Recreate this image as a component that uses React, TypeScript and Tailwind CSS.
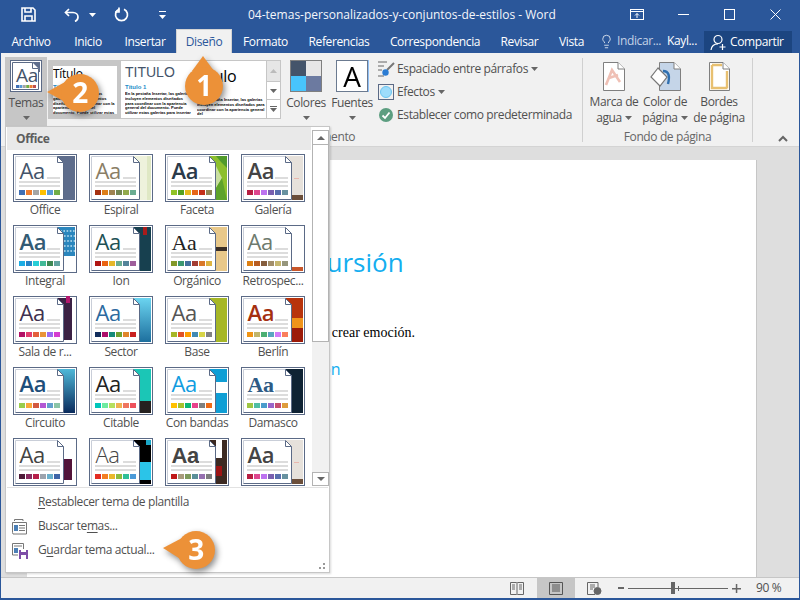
import React from "react";
import { Lightbulb } from "lucide-react";

type Theme = { name: string; aa: string; cls: string; sw: string[]; art: React.ReactNode };

const Rect = (x: number, y: number, w: number, h: number, f: string) => <rect x={x} y={y} width={w} height={h} fill={f} />;

const themes: Theme[] = [
  { name: "Office", aa: "#44546a", cls: "font-['Open_Sans']", sw: ["#3f6fb5", "#ed7d31", "#a5a5a5", "#ffc000", "#5b9bd5", "#70ad47"], art: Rect(40, 2, 22, 44, "#5e6d8c") },
  { name: "Espiral", aa: "#8a7e66", cls: "font-['Open_Sans']", sw: ["#a53010", "#de7e18", "#9f8351", "#728653", "#92aa4c", "#6aac91"], art: <>{Rect(40, 2, 22, 44, "#eef2dc")}{Rect(58, 2, 4, 44, "#dfe8c4")}</> },
  { name: "Faceta", aa: "#2a3a4a", cls: "font-['Open_Sans'] font-semibold", sw: ["#90c226", "#54a021", "#e6b91e", "#e76618", "#c42f1a", "#918655"], art: <>{Rect(40, 2, 22, 44, "#8cbf2e")}<polygon points="51,12 57,24 51,34" fill="#c9dfa0" /><polygon points="51,2 62,2 62,14 56,8" fill="#4f9a2b" /><polygon points="51,34 57,24 62,46 51,46" fill="#5ea32b" /></> },
  { name: "Galería", aa: "#444444", cls: "font-['Open_Sans'] font-semibold", sw: ["#b71e42", "#de478e", "#bc72f0", "#795faf", "#586ead", "#6892a0"], art: <>{Rect(40, 2, 22, 44, "#e6e1db")}{Rect(51, 41, 11, 5, "#6b4e3a")}{Rect(53, 24, 5, 1, "#e9b7ae")}</> },
  { name: "Integral", aa: "#335b74", cls: "font-['Open_Sans'] font-semibold", sw: ["#1cade4", "#2683c6", "#27ced7", "#42ba97", "#3e8853", "#62a39f"], art: <>{Rect(40, 2, 22, 29, "#2b86bd")}<path d="M44 6H62M51 11H62M51 16H62M51 21H62M51 26H62" stroke="#bfe0f0" strokeWidth="1.6" strokeDasharray="1.6 1.6" /></> },
  { name: "Ion", aa: "#1e5155", cls: "font-['Open_Sans']", sw: ["#b01513", "#ea6312", "#e6b729", "#6aac90", "#54849a", "#9e5e9b"], art: <>{Rect(40, 2, 22, 44, "#17404f")}{Rect(54, 2, 4, 8, "#a81c1c")}</> },
  { name: "Orgánico", aa: "#222222", cls: "font-['Liberation_Serif']", sw: ["#83992a", "#3c9770", "#44709d", "#a23c33", "#d97828", "#deb340"], art: <>{Rect(40, 2, 22, 44, "#e8c88a")}{Rect(51, 22, 11, 4, "#3a2e26")}</> },
  { name: "Retrospec...", aa: "#6e7a6e", cls: "font-['Open_Sans']", sw: ["#dd8014", "#b85c20", "#855d3d", "#a28e6a", "#c5b66f", "#96967c"], art: Rect(51, 42, 11, 4, "#c8562a") },
  { name: "Sala de r...", aa: "#40314f", cls: "font-['Open_Sans']", sw: ["#b31166", "#e33d6f", "#e45f3c", "#e9943a", "#9b6bf2", "#d53dd0"], art: <>{Rect(40, 2, 19, 42, "#3b2144")}{Rect(53, 0, 4, 7, "#b3176e")}</> },
  { name: "Sector", aa: "#2c6aa0", cls: "font-['Open_Sans']", sw: ["#122d5c", "#ad0e6a", "#148a78", "#6fa22f", "#e0862b", "#c9201f"], art: <><linearGradient id="gs" x1="0" y1="0" x2="0" y2="1"><stop offset="0" stopColor="#6bd4f0" /><stop offset="1" stopColor="#1d6f9e" /></linearGradient><rect x="40" y="2" width="22" height="44" fill="url(#gs)" /></> },
  { name: "Base", aa: "#555555", cls: "font-['Open_Sans']", sw: ["#a6b727", "#df5327", "#fe9e00", "#418ab3", "#d7d447", "#818183"], art: Rect(40, 2, 22, 44, "#a6b727") },
  { name: "Berlín", aa: "#a53010", cls: "font-['Open_Sans'] font-semibold", sw: ["#f09415", "#c1b56b", "#4baf73", "#5aa6c0", "#d17df9", "#fa7e5c"], art: <>{Rect(40, 2, 22, 20, "#b8330c")}{Rect(40, 22, 22, 10, "#f0941a")}{Rect(40, 32, 22, 14, "#9c1a08")}</> },
  { name: "Circuito", aa: "#1e4e79", cls: "font-['Open_Sans'] font-semibold", sw: ["#9acd4c", "#faa93a", "#d35940", "#b258d3", "#63a0cc", "#8ac4a7"], art: <><linearGradient id="gc" x1="0" y1="0" x2="0" y2="1"><stop offset="0" stopColor="#4fb8d8" /><stop offset="1" stopColor="#0a2a5c" /></linearGradient><rect x="40" y="2" width="22" height="44" fill="url(#gc)" /></> },
  { name: "Citable", aa: "#222222", cls: "font-['Open_Sans']", sw: ["#00c6bb", "#6feba0", "#b6df5e", "#efb251", "#ef755f", "#ed515c"], art: <>{Rect(40, 2, 22, 32, "#1bc6b6")}{Rect(40, 34, 22, 12, "#25211f")}</> },
  { name: "Con bandas", aa: "#109ce0", cls: "font-['Open_Sans']", sw: ["#ffc000", "#a5c22d", "#0bb874", "#e8418b", "#808080", "#ef6a15"], art: <>{Rect(40, 2, 22, 13, "#0f9ed5")}{Rect(40, 26, 22, 20, "#0f9ed5")}</> },
  { name: "Damasco", aa: "#2e5b85", cls: "font-['Liberation_Serif'] font-bold", sw: ["#9ec544", "#50bea3", "#4a9ccc", "#9a66ca", "#c54f71", "#de9c3c"], art: Rect(40, 2, 22, 44, "#0e2233") },
  { name: "", aa: "#444444", cls: "font-['Open_Sans']", sw: ["#4e1a38", "#8a2a5f", "#b61f4a", "#9ca3ad", "#6ab0cc", "#3e65a8"], art: Rect(40, 21, 19, 21, "#52143a") },
  { name: "", aa: "#444444", cls: "font-['Open_Sans'] font-light", sw: ["#e32d23", "#f47e22", "#e9b82c", "#8dbb3f", "#2fc098", "#4a9ad8"], art: <>{Rect(40, 2, 22, 44, "#000000")}{Rect(51, 24, 11, 18, "#2bc4e8")}{Rect(57, 2, 5, 5, "#1aa7c8")}</> },
  { name: "", aa: "#444444", cls: "font-['Liberation_Sans'] font-bold", sw: ["#c01818", "#a89b7c", "#7e9a5c", "#5a8f99", "#9670b0", "#7d7d7d"], art: <>{Rect(40, 2, 22, 44, "#3c2a22")}{Rect(51, 2, 6, 18, "#ffffff")}{Rect(51, 28, 6, 10, "#9c1414")}</> },
  { name: "", aa: "#444444", cls: "font-['Open_Sans'] font-semibold", sw: ["#b71e42", "#de478e", "#bc72f0", "#795faf", "#586ead", "#6892a0"], art: <>{Rect(40, 2, 22, 44, "#e6e1db")}{Rect(51, 41, 11, 5, "#6b4e3a")}{Rect(53, 24, 5, 1, "#e9b7ae")}</> },
];

function Tile({ t }: { t: Theme }) {
  return (
    <svg width="64" height="48" viewBox="0 0 64 48" className="block">
      <rect x="0.5" y="0.5" width="63" height="47" fill="#fff" stroke="#5b6a86" />
      {t.art}
      <path d="M2.5 2.5H44.5L50.5 8.5V45.5H2.5Z" fill="#fff" />
      <path d="M2.5 45.5V2.5H44.5" fill="none" stroke="#c9ced8" />
      <path d="M44.5 2.5L50.5 8.5V45.5H2.5M44.5 2.5V8.5H50.5" fill="none" stroke="#5b6a86" />
      <text x="6.5" y="25" fontSize="22" fill={t.aa} className={t.cls}>Aa</text>
      <rect x="34" y="23" width="13" height="2" fill="#dcdcdc" />
      <rect x="6" y="27" width="41" height="2" fill="#dcdcdc" />
      <rect x="6" y="31" width="41" height="2" fill="#dcdcdc" />
      {t.sw.map((c, i) => <rect key={i} x={6 + i * 7} y="36" width="6" height="5" fill={c} />)}
    </svg>
  );
}

function Caret({ className = "", color = "#666" }: { className?: string; color?: string }) {
  return <svg width="7" height="4" viewBox="0 0 7 4" className={"inline-block " + className}><path d="M0 0H7L3.5 4Z" fill={color} /></svg>;
}

const tabs: [string, string][] = [
  ["Archivo", "w-[62px]"], ["Inicio", "w-[52px]"], ["Insertar", "w-[62px]"], ["Diseño", "w-[56px]"], ["Formato", "w-[67px]"],
  ["Referencias", "w-[80px]"], ["Correspondencia", "w-[112px]"], ["Revisar", "w-[57px]"], ["Vista", "w-[47px]"],
];

const body = "En la pestaña Insertar, las galerías incluyen elementos diseñados para coordinar con la apariencia general del documento. Puede utilizar estas galerías para insertar tablas,";
const bodyShort = "En la pestaña Insertar, las galerías incluyen elementos diseñados para coordinar con la apariencia general del";

function Balloon({ pos, w, h, cx, cy, tail, n }: { pos: string; w: number; h: number; cx: number; cy: number; tail: string; n: string }) {
  return (
    <svg width={w} height={h} viewBox={`0 0 ${w} ${h}`} className={"absolute drop-shadow-[2px_3px_3px_rgba(0,0,0,0.45)] " + pos}>
      <polygon points={tail} fill="#ec9138" />
      <circle cx={cx} cy={cy} r="19" fill="#ec9138" />
      <text x={cx} y={cy + 10} textAnchor="middle" fontSize="28" fill="#fff" className="font-['Open_Sans'] font-bold">{n}</text>
    </svg>
  );
}

function RibbonLarge({ w, icon, l1, l2 }: { w: string; icon: React.ReactNode; l1: string; l2?: React.ReactNode }) {
  return (
    <div className={"flex flex-col items-center shrink-0 " + w}>
      <div className="h-[32px] flex items-start justify-center">{icon}</div>
      <div className="mt-[3px] h-[16px] leading-[16px] whitespace-nowrap">{l1}</div>
      {l2 ? <div className="h-[16px] leading-[16px] whitespace-nowrap flex items-center">{l2}</div> : null}
    </div>
  );
}

export default function App() {
  return (
    <div className="relative w-[800px] h-[600px] overflow-hidden bg-[#2b579a] flex flex-col font-['Open_Sans',sans-serif] text-[12px] tracking-[-0.38px] text-[#505050]">
      {/* Title bar */}
      <div className="h-[29px] flex items-center text-white">
        <div className="w-[248px] flex items-center pl-[21px]">
          <svg width="15" height="15" viewBox="0 0 15 15" fill="none" stroke="#fff" strokeWidth="1.6"><path d="M1 1H12L14 3V14H1Z" /><path d="M4 1V5H10V1M4 14V9H11V14" /></svg>
          <svg width="15" height="14" viewBox="0 0 15 14" fill="none" stroke="#fff" strokeWidth="1.7" className="ml-[28px]"><path d="M5 1L1.5 4.5L5 8" /><path d="M2 4.5H9C12 4.5 14 6.5 14 9C14 11 13 12.5 11 13.5" /></svg>
          <Caret color="#fff" className="ml-[10px]" />
          <svg width="15" height="15" viewBox="0 0 15 15" fill="none" stroke="#fff" strokeWidth="1.7" className="ml-[18px]"><path d="M5 2.2A6 6 0 1 0 10 2.2" /><path d="M4 0.5V5H0" transform="translate(1 0)" /></svg>
          <svg width="7" height="8" viewBox="0 0 7 8" fill="#fff" className="ml-[30px]"><rect x="0" y="0" width="7" height="1" /><path d="M0 4H7L3.5 8Z" /></svg>
        </div>
        <div className="w-[304px] text-center whitespace-nowrap text-[#f4f6fa] text-[12px] tracking-[0px] mt-[1px]">04-temas-personalizados-y-conjuntos-de-estilos  -  Word</div>
        <div className="flex-1 flex items-center pl-[78px]">
          <svg width="14" height="11" viewBox="0 0 14 11" fill="none" stroke="#fff"><rect x="0.5" y="0.5" width="13" height="10" /><path d="M0.5 2.5H13.5M7 9V4.5M5 6.5L7 4.5L9 6.5" /></svg>
          <svg width="11" height="1" className="ml-[34px]"><rect width="11" height="1" fill="#fff" /></svg>
          <svg width="11" height="11" fill="none" stroke="#fff" className="ml-[35px]"><rect x="0.5" y="0.5" width="10" height="10" /></svg>
          <svg width="11" height="11" fill="none" stroke="#fff" className="ml-[35px]"><path d="M0.5 0.5L10.5 10.5M10.5 0.5L0.5 10.5" /></svg>
        </div>
      </div>

      {/* Tabs */}
      <div className="h-[24px] flex items-stretch text-white">
        {tabs.map(([t, w]) => (
          <div key={t} className={"flex items-center justify-center whitespace-nowrap pt-[1px] " + w + (t === "Diseño" ? " bg-[#f1f1f1] text-[#2b579a] border-x border-t border-[#d4d4d4]" : "")}>{t}</div>
        ))}
        <div className="flex items-center ml-[4px] w-[105px] whitespace-nowrap">
          <Lightbulb size={15} strokeWidth={1.2} color="#fff" />
          <span className="ml-[3px] text-[#c4d2e6]">Indicar...</span>
          <span className="ml-[6px]">Kayl...</span>
        </div>
        <div className="w-[88px] mt-[2px] bg-[#1c4580] flex items-center pl-[6px] whitespace-nowrap">
          <svg width="17" height="17" viewBox="0 0 17 17" fill="none" stroke="#fff" strokeWidth="1.2"><circle cx="8" cy="5.5" r="4" /><path d="M1 16C1.5 12 4.5 9.8 8 9.8M12.5 10V16M9.5 13H15.5" /></svg>
          <span className="ml-[3px]">Compartir</span>
        </div>
      </div>

      <div className="flex-1 mx-[1px] flex flex-col min-h-0">
        {/* Ribbon */}
        <div className="h-[94px] bg-[#f1f1f1] border-b border-[#d4d4d4] flex shrink-0">
          <div className="w-[581px] flex flex-col">
            <div className="h-[73px] flex pl-[4px] pt-[4px]">
              <div className="w-[42px] h-[69px] bg-[#c6c6c6] flex flex-col items-center pt-[3px]">
                <svg width="32" height="32" viewBox="0 0 32 32">
                  <rect x="0.5" y="0.5" width="31" height="31" fill="#fff" stroke="#5b6a86" />
                  <rect x="20" y="2" width="10" height="10" fill="#5e6d8c" />
                  <path d="M2.5 2.5H22.5L28.5 8.5V29.5H2.5Z" fill="#fff" stroke="#5b6a86" />
                  <path d="M22.5 2.5V8.5H28.5" fill="#fff" stroke="#5b6a86" />
                  <text x="6" y="22" fontSize="19" fill="#44546a" className="font-['Open_Sans']">Aa</text>
                  {["#3f6fb5", "#5b9bd5", "#a5a5a5", "#70ad47", "#ed7d31", "#c0504d"].map((c, i) => <rect key={i} x={6 + i * 3.4} y="25" width="3" height="3" fill={c} />)}
                </svg>
                <div className="mt-[3px] h-[16px] leading-[16px]">Temas</div>
                <Caret className="mt-[5px]" />
              </div>
              <div className="ml-[1px] mt-[3px] w-[233px] h-[59px] border border-[#c6c6c6] bg-white flex font-['Liberation_Sans'] tracking-normal text-black overflow-hidden">
                <div className="w-[72px] h-full bg-[#c6c6c6] p-[4px] pt-[5px] pb-[4px] shrink-0">
                  <div className="h-full bg-white overflow-hidden">
                    <div className="text-[12px] leading-[14px] font-['Open_Sans'] tracking-[-0.3px] mt-[1px]">Título</div>
                    <div className="text-[6px] leading-[8px] mt-[2px] font-bold text-[#1c8cc8]">Título 1</div>
                    <div className="text-[4px] leading-[4.8px] font-bold mt-[1px]">{body}</div>
                  </div>
                </div>
                <div className="w-[76px] shrink-0 pl-[4px] pr-[6px] overflow-hidden">
                  <div className="text-[14px] leading-[16px] mt-[3px] text-[#44546a]">TITULO</div>
                  <div className="text-[6px] leading-[8px] mt-[3px] font-bold text-[#1c8cc8]">Título 1</div>
                  <div className="text-[4px] leading-[4.8px] font-bold mt-[1px] h-[24px] overflow-hidden">{body}</div>
                </div>
                <div className="w-[69px] shrink-0 overflow-hidden">
                  <div className="text-[16px] leading-[20px] mt-[5px] -ml-[1px] font-['Open_Sans'] tracking-[-0.3px]">Título</div>
                  <div className="text-[4px] leading-[4.8px] mt-[12px] font-bold">{bodyShort}</div>
                </div>
                <div className="w-[14px] shrink-0 border-l border-[#c6c6c6] flex flex-col">
                  <div className="h-[21px] bg-[#e6e6e6] border-b border-[#c6c6c6] flex items-center justify-center"><svg width="7" height="4"><path d="M0 4H7L3.5 0Z" fill="#bbb" /></svg></div>
                  <div className="h-[18px] bg-white border-b border-[#c6c6c6] flex items-center justify-center"><Caret /></div>
                  <div className="flex-1 bg-white flex flex-col items-center justify-center"><svg width="7" height="6"><rect width="7" height="1" fill="#666" /><path d="M0 2H7L3.5 6Z" fill="#666" /></svg></div>
                </div>
              </div>
              <div className="flex pt-[3px] ml-[2px]">
                <div><RibbonLarge w="w-[46px]" l1="Colores" icon={
                  <div className="w-[32px] h-[32px] border border-[#7f7f7f] grid grid-cols-2 grid-rows-2">
                    <div className="bg-[#44546a]" /><div className="bg-[#e7e6e6]" /><div className="bg-[#48c4fc]" /><div className="bg-[#6c7aa0]" />
                  </div>} />
                  <div className="flex justify-center mt-[5px]"><Caret /></div>
                </div>
                <div><RibbonLarge w="w-[46px]" l1="Fuentes" icon={
                  <div className="w-[32px] h-[32px] border border-[#6b7a90] bg-white flex items-center justify-center text-[28px] leading-none text-black font-['Open_Sans'] drop-shadow-[1px_0_0_rgba(0,120,255,0.4)]">A</div>} />
                  <div className="flex justify-center mt-[5px]"><Caret /></div>
                </div>
              </div>
              <div className="ml-[3px] flex flex-col pt-[1px] whitespace-nowrap">
                <div className="h-[23px] flex items-center">
                  <svg width="17" height="16" viewBox="0 0 17 16" fill="none"><path d="M0 1H9M0 5H6M0 9H4M0 15H6" stroke="#666" /><path d="M16 2L9 9" stroke="#777" strokeWidth="2" /><circle cx="7.5" cy="11.5" r="3.2" fill="#2b7cd3" /></svg>
                  <span className="ml-[2px]">Espaciado entre párrafos</span><Caret className="ml-[3px]" />
                </div>
                <div className="h-[23px] flex items-center">
                  <div className="w-[16px] h-[16px] border border-[#5b6a86] flex items-center justify-center"><div className="w-[12px] h-[12px] rounded-full bg-[#9ddcfb] border border-[#6cc4f0]" /></div>
                  <span className="ml-[3px]">Efectos</span><Caret className="ml-[3px]" />
                </div>
                <div className="h-[23px] flex items-center">
                  <svg width="16" height="16" viewBox="0 0 16 16"><circle cx="8" cy="8" r="7" fill="#5c9e80" /><path d="M4.5 8.5L7 11L11.5 5.5" fill="none" stroke="#fff" strokeWidth="1.8" /></svg>
                  <span className="ml-[3px]">Establecer como predeterminada</span>
                </div>
              </div>
            </div>
            <div className="flex-1 flex items-center justify-center pt-[2px] whitespace-nowrap text-[#666]">Formato del documento</div>
          </div>
          <div className="w-[1px] h-[84px] mt-[5px] bg-[#d0d0d0]" />
          <div className="w-[169px] flex flex-col">
            <div className="h-[73px] flex pl-[8px] pt-[7px]">
              <RibbonLarge w="w-[46px]" l1="Marca de" l2={<>agua<Caret className="ml-[3px]" /></>} icon={
                <svg width="22" height="29" viewBox="0 0 22 29" className="mt-[2px]"><path d="M0.5 0.5H15L21.5 7V28.5H0.5Z" fill="#fff" stroke="#7f7f7f" /><path d="M15 0.5V7H21.5" fill="#fff" stroke="#7f7f7f" /><path d="M3 23L9 8L17 20M6 16L15 13" fill="none" stroke="#efc0b5" strokeWidth="2.6" /></svg>} />
              <RibbonLarge w="w-[56px]" l1="Color de" l2={<>página<Caret className="ml-[3px]" /></>} icon={
                <svg width="31" height="29" viewBox="0 0 31 29" className="mt-[2px]"><path d="M9.5 0.5H24L30.5 7V28.5H9.5Z" fill="#c5d5e8" stroke="#7f7f7f" /><path d="M24 0.5V7H30.5" fill="#fff" stroke="#7f7f7f" /><path d="M8 6L1 15L10 24L17 15Z" fill="#fff" stroke="#777" strokeWidth="1.2" /><path d="M13 9C19 9 20 14 18 22" fill="none" stroke="#3070b0" strokeWidth="2.4" /></svg>} />
              <RibbonLarge w="w-[52px]" l1="Bordes" l2="de página" icon={
                <svg width="21" height="29" viewBox="0 0 21 29" className="mt-[2px]"><path d="M0.5 0.5H14L20.5 7V28.5H0.5Z" fill="#fff" stroke="#7f7f7f" /><path d="M14 0.5V7H20.5" fill="#fff" stroke="#7f7f7f" /><path d="M3 3V26H18.5" fill="none" stroke="#e8c070" strokeWidth="2.4" /><path d="M3 3H13M18 9V26" fill="none" stroke="#e8c070" strokeWidth="2.4" /></svg>} />
            </div>
            <div className="flex-1 flex items-center justify-center pt-[2px] whitespace-nowrap text-[#666]">Fondo de página</div>
          </div>
          <div className="w-[1px] h-[84px] mt-[5px] bg-[#d0d0d0]" />
          <div className="flex-1 flex items-end justify-end pr-[11px] pb-[4px]">
            <svg width="10" height="7" viewBox="0 0 10 7" fill="none" stroke="#666" strokeWidth="2"><path d="M1 6L5 2L9 6" /></svg>
          </div>
        </div>

        {/* Document */}
        <div className="flex-1 bg-[#dedede] pt-[13px] pl-[26px] pr-[42px] min-h-0 overflow-hidden">
          <div className="h-full bg-white border-r border-[#c6c6c6] overflow-hidden">
            <div className="mt-[84px] ml-[259px] h-[36px] leading-[36px] text-[26px] tracking-normal text-[#14aef0] whitespace-nowrap">Excursión</div>
            <div className="mt-[45px] ml-[224px] text-[14px] tracking-normal leading-[16px] text-black font-['Liberation_Serif'] whitespace-nowrap">diseñado para crear emoción.</div>
            <div className="mt-[17px] ml-[219px] text-[16px] tracking-normal leading-[22px] text-[#14aef0] whitespace-nowrap">Introducción</div>
          </div>
        </div>

        {/* Status */}
        <div className="h-[21px] shrink-0 bg-[#f1f1f1] border-t border-[#c6c6c6] flex items-stretch pl-[509px]">
          <div className="flex items-center">
            <svg width="14" height="13" viewBox="0 0 14 13" fill="none" stroke="#666"><path d="M0.5 0.5H6.5L7 1L7.5 0.5H13.5V12.5H7.5L7 12L6.5 12.5H0.5ZM7 1V12M2 3H5M2 5H5M2 7H5M9 3H12M9 5H12M9 7H12" /></svg>
          </div>
          <div className="w-[38px] bg-[#c6c6c6] flex items-center justify-center ml-[13px]">
            <svg width="14" height="13" viewBox="0 0 14 13" fill="none" stroke="#555"><path d="M0.5 0.5H13.5V12.5H0.5ZM3 3H11M3 5H11M3 7H11M3 9H11" /></svg>
          </div>
          <div className="flex items-center ml-[12px]">
            <svg width="15" height="13" viewBox="0 0 15 13" fill="none" stroke="#666"><path d="M8 12.5H0.5V0.5H11V5M3 3H8M3 5H8M3 7H6" /><circle cx="10.5" cy="9" r="3.5" fill="#666" /></svg>
          </div>
          <div className="flex items-center ml-[16px]">
            <div className="w-[6px] h-[2px] bg-[#666]" />
            <div className="relative ml-[4px] w-[100px] h-[1px] bg-[#666]">
              <div className="absolute left-[43px] top-[-6px] w-[4px] h-[12px] bg-[#666]" />
              <div className="absolute left-[50px] top-[-2px] w-[1px] h-[5px] bg-[#666]" />
            </div>
            <svg width="9" height="9" className="ml-[4px]"><path d="M0 4H9V5.5H0ZM3.8 0H5.3V9H3.8Z" fill="#666" /></svg>
            <span className="ml-[15px] whitespace-nowrap">90 %</span>
          </div>
        </div>
      </div>
      <div className="h-[2px] shrink-0" />

      {/* Theme popup */}
      <div className="absolute left-[5px] top-[126px] w-[325px] h-[447px] bg-white border border-[#c6c6c6] shadow-[1px_1px_2px_rgba(0,0,0,0.15)] flex flex-col">
        <div className="flex h-[360px] shrink-0">
          <div className="w-[306px] overflow-hidden pl-[1px]">
            <div className="h-[23px] bg-[#e9e9e9] w-[304px] flex items-center pl-[9px] font-bold text-[#5d5d5d]">Office</div>
            <div className="grid grid-cols-[76px_76px_76px_76px] auto-rows-[71px] mt-[4px]">
              {themes.map((t, i) => (
                <div key={i} className="flex flex-col items-center">
                  <Tile t={t} />
                  {t.name ? <div className="h-[15px] leading-[15px] whitespace-nowrap">{t.name}</div> : null}
                </div>
              ))}
            </div>
          </div>
          <div className="w-[17px] pt-[3px] flex flex-col h-full">
            <div className="h-[15px] border border-[#b3b3b3] bg-white flex items-center justify-center"><svg width="8" height="4"><path d="M0 4H8L4 0Z" fill="#666" /></svg></div>
            <div className="h-[197px] border-x border-b border-[#b3b3b3] bg-white" />
            <div className="flex-1 bg-[#f1f1f1]" />
            <div className="h-[14px] border border-[#b3b3b3] bg-white flex items-center justify-center mb-[1px]"><svg width="8" height="4"><path d="M0 0H8L4 4Z" fill="#666" /></svg></div>
          </div>
        </div>
        <div className="h-[1px] bg-[#e2e2e2] mx-[1px] shrink-0" />
        <div className="relative flex-1 flex flex-col pt-[2px]">
          <div className="h-[24px] flex items-center pl-[32px] whitespace-nowrap"><span><u className="underline-offset-2">R</u>establecer tema de plantilla</span></div>
          <div className="h-[24px] flex items-center pl-[5px] whitespace-nowrap">
            <svg width="17" height="17" viewBox="0 0 17 17" fill="none" stroke="#777" className="mr-[10px]"><path d="M3.5 3V1.5H12V3M1.5 14.5V4.5H15.5V16H2Z" /><rect x="3" y="7" width="4" height="6" fill="#4b7fb5" stroke="none" /><path d="M8 7.5H14M8 10H14M8 12.5H14" /></svg>
            <span>Buscar te<u className="underline-offset-2">m</u>as...</span>
          </div>
          <div className="h-[24px] flex items-center pl-[5px] whitespace-nowrap">
            <svg width="17" height="17" viewBox="0 0 17 17" fill="none" stroke="#777" className="mr-[10px]"><path d="M1.5 1.5H12.5V7M1.5 1.5V13H7M3 4H11" /><rect x="3" y="6" width="4" height="5" fill="#4b7fb5" stroke="none" /><rect x="8" y="8" width="9" height="9" fill="#7e4ea8" stroke="none" /><rect x="10" y="13" width="5" height="4" fill="#fff" stroke="none" /><rect x="10" y="8" width="5" height="2" fill="#fff" stroke="none" /></svg>
            <span>G<u className="underline-offset-2">u</u>ardar tema actual...</span>
          </div>
          <svg width="6" height="6" className="absolute right-[4px] bottom-[3px]"><path d="M4 0H6V2H4ZM0 4H2V6H0ZM4 4H6V6H4Z" fill="#999" /></svg>
        </div>
      </div>

      <Balloon pos="left-[180px] top-[52px]" w={50} h={60} cx={24} cy={34} tail="23,4 12,19 34,19" n="1" />
      <Balloon pos="left-[45px] top-[70px]" w={60} h={48} cx={35} cy={23} tail="2,22 20,12 22,33" n="2" />
      <Balloon pos="left-[160px] top-[527px]" w={60} h={48} cx={36} cy={23} tail="3,21 22,11 22,33" n="3" />
    </div>
  );
}
